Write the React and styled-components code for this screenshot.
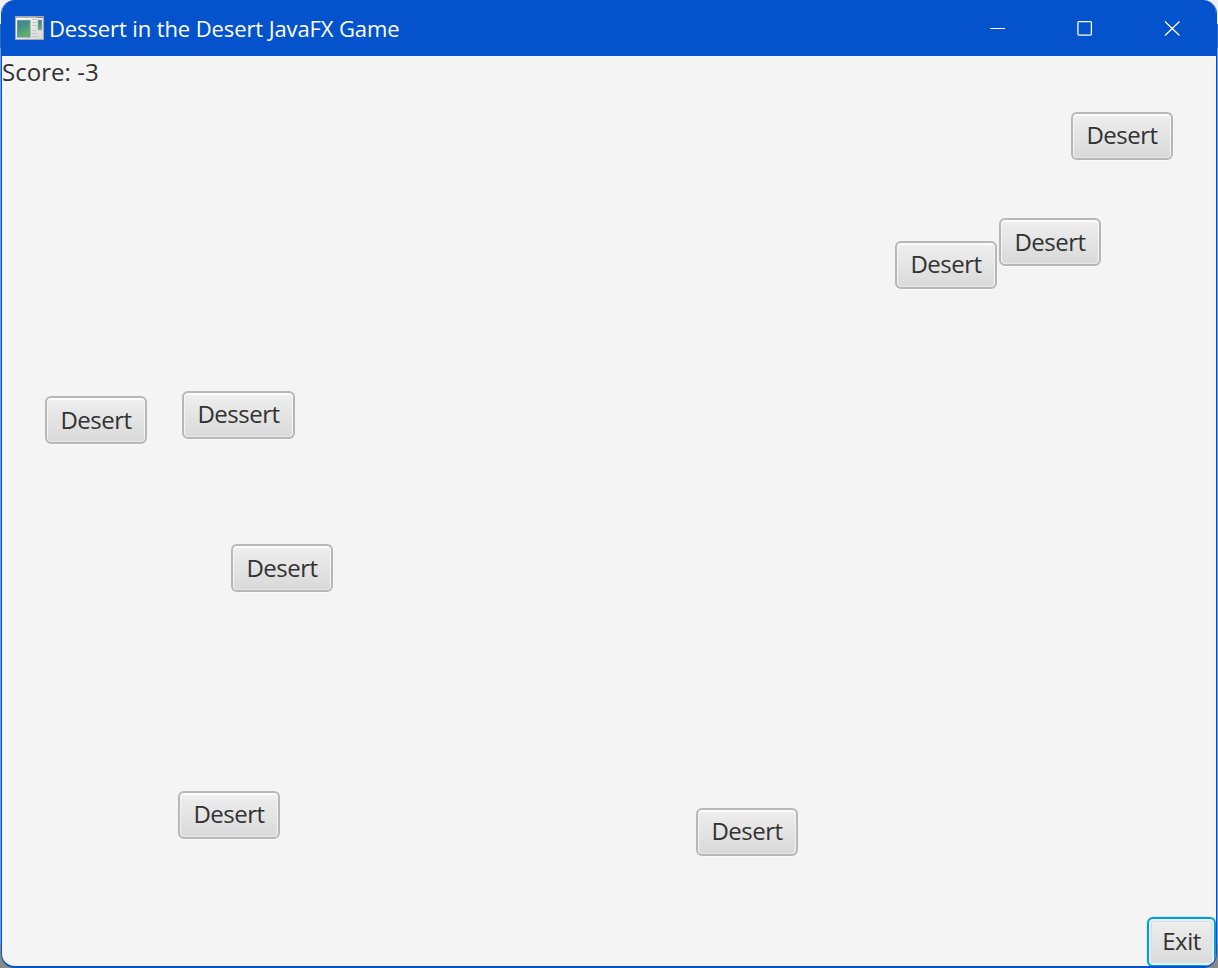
import React from "react";
import styled, { createGlobalStyle, css } from "styled-components";

const GlobalStyle = createGlobalStyle`
  html, body { margin: 0; padding: 0; }
  body { background: linear-gradient(#f0f0f0 0 24px, #2f67c4 24px 48px, #6b9be0 48px 944px, #8a8a8a 944px); overflow: hidden; }
  * { box-sizing: border-box; }
`;

const Window = styled.main`
  width: 1216px;
  height: 968px;
  margin-left: 1px;
  display: flex;
  flex-direction: column;
  border: solid #0453cd;
  border-width: 0 1px 2px 1px;
  border-radius: 14px;
  overflow: hidden;
  background: #f4f4f4;
  font-family: "Open Sans", "Noto Sans", sans-serif;
  color: #323232;
`;

const TitleBar = styled.header`
  height: 56px;
  flex: none;
  display: flex;
  align-items: center;
  padding-left: 13px;
  background: #0453cd;
  color: #fff;
`;

const AppIcon = styled.svg`
  width: 30px;
  height: 26px;
  flex: none;
`;

const Title = styled.h1`
  flex: 1;
  margin: 0 0 0 4px;
  font-size: 22px;
  font-weight: 400;
  line-height: 30px;
  letter-spacing: -0.11px;
  white-space: nowrap;
  padding-bottom: 1px;
`;

const Controls = styled.div`
  display: flex;
  height: 100%;
`;

const Control = styled.button`
  width: 87.5px;
  height: 100%;
  padding: 0;
  border: 0;
  display: grid;
  place-items: center;
  background: transparent;
  color: inherit;
  svg { display: block; }
`;

const Field = styled.section`
  position: relative;
  flex: 1;
`;

const Score = styled.p`
  margin: 0;
  font-size: 24px;
  line-height: 32px;
  letter-spacing: 0.03px;
`;

const GameButton = styled.button`
  position: absolute;
  left: ${(p) => p.$x}px;
  top: ${(p) => p.$y}px;
  width: ${(p) => p.$w}px;
  height: 48px;
  padding: 0 0 ${(p) => (p.$raised ? 3 : 1)}px;
  border: 2px solid #b7b7b7;
  border-radius: 6px;
  background: linear-gradient(#efefef, #d9d9d9);
  box-shadow: inset 0 2px 1px #fcfcfc, inset 1px 0 1px #f4f4f4,
    inset -1px 0 1px #f4f4f4, inset 0 -1px 1px #e6e6e6, 0 1px 0 #fafafa;
  color: #323232;
  font: 400 24px/34px "Open Sans", "Noto Sans", sans-serif;
  letter-spacing: -0.5px;
  white-space: nowrap;
  ${(p) =>
    p.$focused &&
    css`
      height: 50px;
      border-color: #039ed3;
      box-shadow: inset 0 0 0 2px #ececec, inset 0 0 0 3px #cfdfe4, 0 0 0 1px #cdeaf3;
    `}
`;

const pieces = [
  { x: 1069, y: 56, label: "Desert", raised: true },
  { x: 997, y: 162, label: "Desert" },
  { x: 893, y: 185, label: "Desert", raised: true },
  { x: 43, y: 340, label: "Desert" },
  { x: 180, y: 335, w: 113, label: "Dessert", raised: true },
  { x: 229, y: 488, label: "Desert" },
  { x: 176, y: 735, label: "Desert", raised: true },
  { x: 694, y: 752, label: "Desert", raised: true },
];

export default function App() {
  return (
    <>
      <GlobalStyle />
      <Window>
        <TitleBar>
          <AppIcon viewBox="0 0 30 26">
            <defs>
              <linearGradient id="screen" x1="0" y1="0" x2="0.4" y2="1">
                <stop offset="0" stopColor="#3f7da0" />
                <stop offset="0.5" stopColor="#459483" />
                <stop offset="1" stopColor="#66b06c" />
              </linearGradient>
              <linearGradient id="frame" x1="0" y1="0" x2="1" y2="1">
                <stop offset="0" stopColor="#fafafa" />
                <stop offset="1" stopColor="#d6d6d6" />
              </linearGradient>
            </defs>
            <rect x="0.5" y="1.5" width="28" height="23" fill="url(#frame)" stroke="#a4a8ad" />
            <path d="M1 2.5H28" stroke="#b4b4b4" />
            <path d="M21 2.5H28" stroke="#858b91" />
            <rect x="2.5" y="5.5" width="12.5" height="16.5" fill="url(#screen)" stroke="#6e9993" />
            <path d="M17 4.5h5M17 7.5h5M17 10.5h5M17 15.5h5M17 18.5h5M17 21.5h5" stroke="#c2c4c5" />
            <rect x="23" y="5" width="4" height="10" fill="url(#screen)" stroke="#9bb5b2" strokeWidth="0.5" />
          </AppIcon>
          <Title>Dessert in the Desert JavaFX Game</Title>
          <Controls>
            <Control aria-label="Minimize">
              <svg width="16" height="16"><path d="M1 8.5h15" stroke="#fff" /></svg>
            </Control>
            <Control aria-label="Maximize">
              <svg width="16" height="16" fill="none" stroke="#fff" strokeWidth="1.3">
                <rect x="0.9" y="1.6" width="13.5" height="13.5" rx="1" />
              </svg>
            </Control>
            <Control aria-label="Close">
              <svg width="16" height="16"><path d="M1 1.5l14.5 14M15.5 1.5L1 15.5" stroke="#fff" strokeWidth="1.3" /></svg>
            </Control>
          </Controls>
        </TitleBar>
        <Field>
          <Score>Score: -3</Score>
          {pieces.map((p, i) => (
            <GameButton key={i} $x={p.x} $y={p.y} $w={p.w || 102} $raised={p.raised}>
              {p.label}
            </GameButton>
          ))}
          <GameButton $x={1145} $y={861} $w={69} $focused $raised>
            Exit
          </GameButton>
        </Field>
      </Window>
    </>
  );
}
